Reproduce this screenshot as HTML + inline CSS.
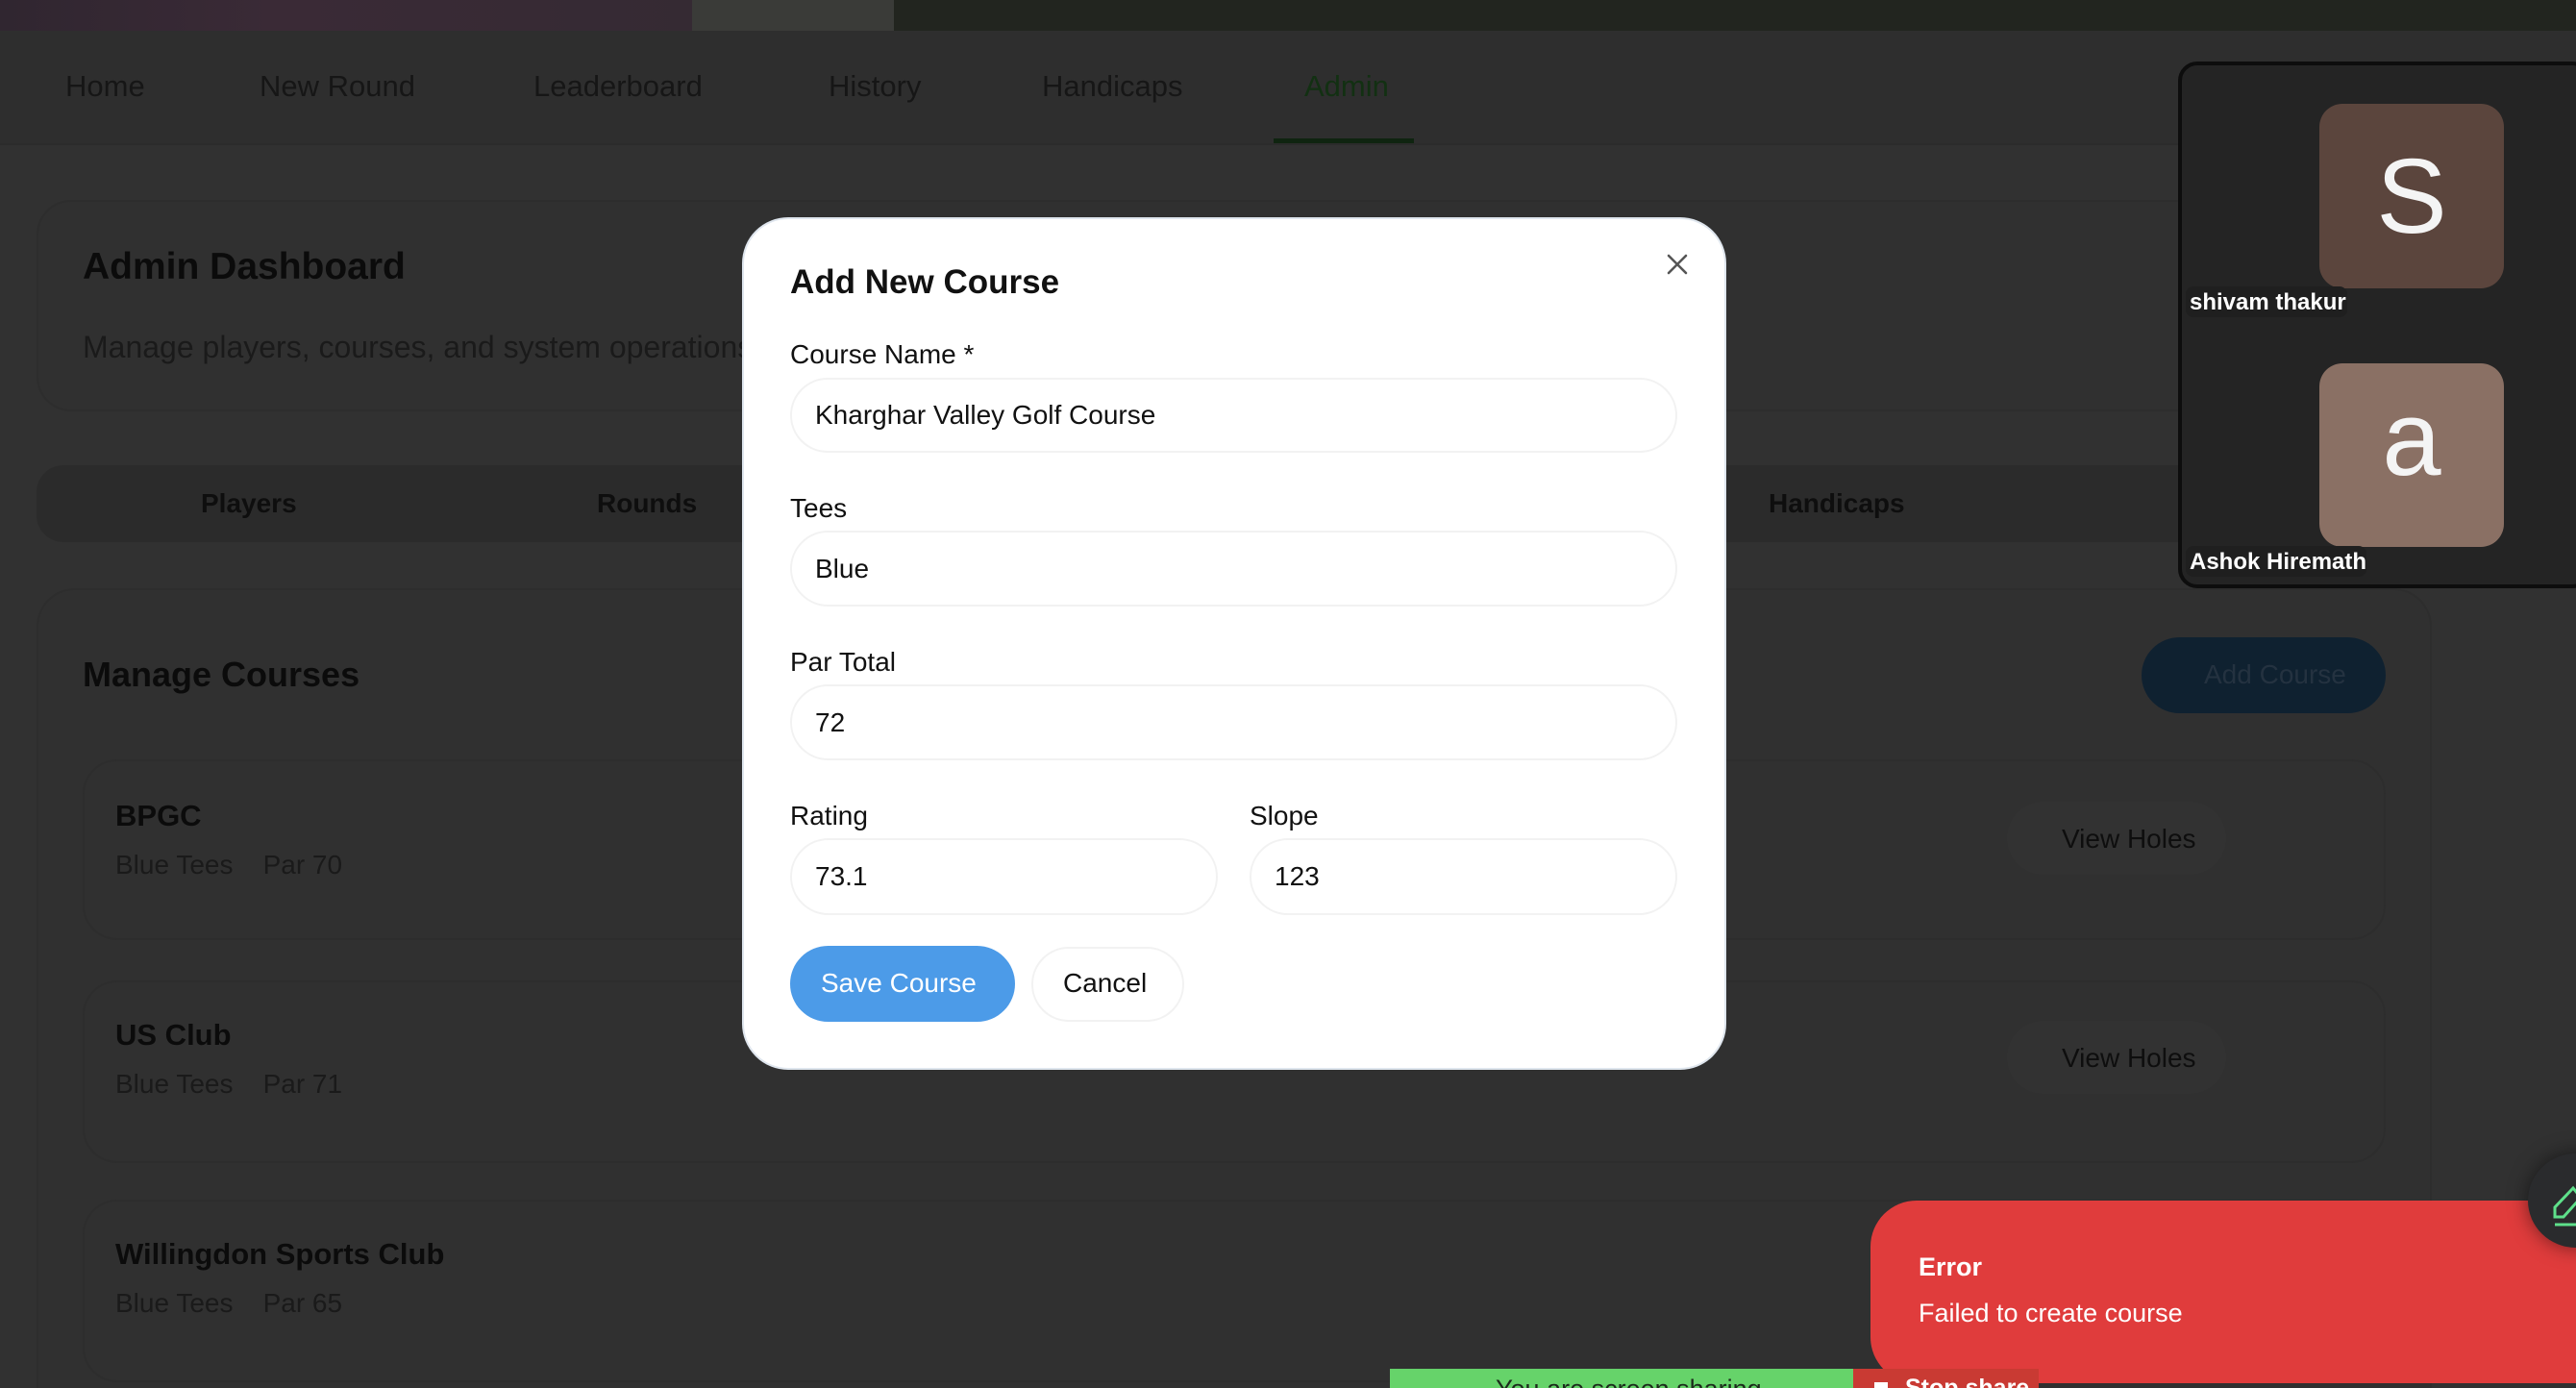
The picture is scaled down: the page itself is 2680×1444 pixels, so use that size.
<!DOCTYPE html>
<html><head><meta charset="utf-8"><style>
*{margin:0;padding:0;box-sizing:border-box}
html,body{width:2680px;height:1444px;overflow:hidden;background:#313131;font-family:"Liberation Sans",sans-serif}
#w{position:relative;width:2680px;height:1444px;overflow:hidden}
.a{position:absolute}
.t{position:absolute;white-space:nowrap;line-height:1}
</style></head><body><div id="w">
<!-- top banner -->
<div class="a" style="left:0;top:0;width:2680px;height:32px;background:#22251f"></div>
<div class="a" style="left:0;top:0;width:720px;height:32px;background:linear-gradient(90deg,#302630,#3a2a36 40%,#352a33)"></div>
<div class="a" style="left:720px;top:0;width:210px;height:32px;background:#3a3b38"></div>
<!-- nav -->
<div class="a" style="left:0;top:32px;width:2680px;height:119px;background:#2e2e2e;border-bottom:2px solid #2b2b2b"></div>
<div class="t" style="left:68px;top:74px;font-size:31px;color:#161616">Home</div>
<div class="t" style="left:270px;top:74px;font-size:31px;color:#161616">New Round</div>
<div class="t" style="left:555px;top:74px;font-size:31px;color:#161616">Leaderboard</div>
<div class="t" style="left:862px;top:74px;font-size:31px;color:#161616">History</div>
<div class="t" style="left:1084px;top:74px;font-size:31px;color:#161616">Handicaps</div>
<div class="t" style="left:1357px;top:74px;font-size:31px;color:#123012">Admin</div>
<div class="a" style="left:1325px;top:144px;width:146px;height:5px;background:#0f2410"></div>
<!-- admin card -->
<div class="a" style="left:38px;top:208px;width:2492px;height:220px;border:2px solid #2d2d2d;border-radius:36px;background:#303030"></div>
<div class="t" style="left:86px;top:258px;font-size:39px;font-weight:bold;color:#0b0b0b">Admin Dashboard</div>
<div class="t" style="left:86px;top:345px;font-size:32px;color:#1a1a1a">Manage players, courses, and system operations</div>
<!-- tabs -->
<div class="a" style="left:38px;top:484px;width:2492px;height:80px;border-radius:28px;background:#2b2b2b"></div>
<div class="t" style="left:209px;top:510px;font-size:28px;font-weight:bold;color:#0e0e0e">Players</div>
<div class="t" style="left:621px;top:510px;font-size:28px;font-weight:bold;color:#0e0e0e">Rounds</div>
<div class="t" style="left:1840px;top:510px;font-size:28px;font-weight:bold;color:#0e0e0e">Handicaps</div>
<!-- manage courses card -->
<div class="a" style="left:38px;top:612px;width:2492px;height:900px;border:2px solid #2d2d2d;border-radius:40px;background:#303030"></div>
<div class="t" style="left:86px;top:684px;font-size:36px;font-weight:bold;color:#0b0b0b">Manage Courses</div>
<div class="a" style="left:2228px;top:663px;width:254px;height:79px;border-radius:40px;background:#0f2130"></div>
<div class="t" style="left:2293px;top:688px;font-size:28px;color:#243240">Add Course</div>
<!-- rows -->
<div class="a" style="left:86px;top:790px;width:2396px;height:188px;border:2px solid #2d2d2d;border-radius:36px"></div>
<div class="t" style="left:120px;top:833px;font-size:31px;font-weight:bold;color:#0b0b0b">BPGC</div>
<div class="t" style="left:120px;top:886px;font-size:28px;color:#1a1a1a">Blue Tees&nbsp;&nbsp;&nbsp;&nbsp;Par 70</div>
<div class="a" style="left:2088px;top:834px;width:228px;height:76px;border-radius:38px;background:#323232"></div>
<div class="t" style="left:2145px;top:859px;font-size:28px;color:#0e0e0e">View Holes</div>
<div class="a" style="left:86px;top:1020px;width:2396px;height:190px;border:2px solid #2d2d2d;border-radius:36px"></div>
<div class="t" style="left:120px;top:1061px;font-size:31px;font-weight:bold;color:#0b0b0b">US Club</div>
<div class="t" style="left:120px;top:1114px;font-size:28px;color:#1a1a1a">Blue Tees&nbsp;&nbsp;&nbsp;&nbsp;Par 71</div>
<div class="a" style="left:2088px;top:1062px;width:228px;height:76px;border-radius:38px;background:#323232"></div>
<div class="t" style="left:2145px;top:1087px;font-size:28px;color:#0e0e0e">View Holes</div>
<div class="a" style="left:86px;top:1248px;width:2396px;height:190px;border:2px solid #2d2d2d;border-radius:36px"></div>
<div class="t" style="left:120px;top:1289px;font-size:31px;font-weight:bold;color:#0b0b0b">Willingdon Sports Club</div>
<div class="t" style="left:120px;top:1342px;font-size:28px;color:#1a1a1a">Blue Tees&nbsp;&nbsp;&nbsp;&nbsp;Par 65</div>
<!-- modal -->
<div class="a" style="left:772px;top:226px;width:1024px;height:887px;border-radius:48px;background:#fff;border:2px solid #dfe6ee"></div>
<div class="t" style="left:822px;top:276px;font-size:35px;font-weight:bold;color:#111">Add New Course</div>
<svg class="a" style="left:1733px;top:263px" width="24" height="24" viewBox="0 0 24 24"><path d="M3 3L21 21M21 3L3 21" stroke="#555" stroke-width="2.6" stroke-linecap="round"/></svg>
<div class="t" style="left:822px;top:355px;font-size:28px;color:#111">Course Name *</div>
<div class="a" style="left:822px;top:393px;width:923px;height:78px;border:2px solid #f2f2f2;border-radius:40px"></div>
<div class="t" style="left:848px;top:418px;font-size:28px;color:#111">Kharghar Valley Golf Course</div>
<div class="t" style="left:822px;top:515px;font-size:28px;color:#111">Tees</div>
<div class="a" style="left:822px;top:552px;width:923px;height:79px;border:2px solid #f2f2f2;border-radius:40px"></div>
<div class="t" style="left:848px;top:578px;font-size:28px;color:#111">Blue</div>
<div class="t" style="left:822px;top:675px;font-size:28px;color:#111">Par Total</div>
<div class="a" style="left:822px;top:712px;width:923px;height:79px;border:2px solid #f2f2f2;border-radius:40px"></div>
<div class="t" style="left:848px;top:738px;font-size:28px;color:#111">72</div>
<div class="t" style="left:822px;top:835px;font-size:28px;color:#111">Rating</div>
<div class="a" style="left:822px;top:872px;width:445px;height:80px;border:2px solid #f2f2f2;border-radius:40px"></div>
<div class="t" style="left:848px;top:898px;font-size:28px;color:#111">73.1</div>
<div class="t" style="left:1300px;top:835px;font-size:28px;color:#111">Slope</div>
<div class="a" style="left:1300px;top:872px;width:445px;height:80px;border:2px solid #f2f2f2;border-radius:40px"></div>
<div class="t" style="left:1326px;top:898px;font-size:28px;color:#111">123</div>
<div class="a" style="left:822px;top:984px;width:234px;height:79px;border-radius:40px;background:#4c9be8"></div>
<div class="t" style="left:854px;top:1009px;font-size:28px;color:#fff">Save Course</div>
<div class="a" style="left:1073px;top:985px;width:159px;height:78px;border-radius:40px;border:2px solid #f2f2f2"></div>
<div class="t" style="left:1106px;top:1009px;font-size:28px;color:#111">Cancel</div>
<!-- participants panel -->
<div class="a" style="left:2266px;top:64px;width:430px;height:548px;border:4px solid #0d0d0d;border-radius:20px;background:#242424"></div>
<div class="a" style="left:2413px;top:108px;width:192px;height:192px;border-radius:24px;background:#5b453d"></div>
<div class="t" style="left:2413px;top:150px;width:192px;text-align:center;font-size:110px;color:#f4f4f4;line-height:1">S</div>
<div class="a" style="left:2274px;top:298px;width:168px;height:32px;border-radius:8px;background:#1f1f1f"></div>
<div class="t" style="left:2278px;top:303px;font-size:24px;font-weight:bold;color:#fff">shivam thakur</div>
<div class="a" style="left:2413px;top:378px;width:192px;height:191px;border-radius:24px;background:#8a7064"></div>
<div class="t" style="left:2413px;top:402px;width:192px;text-align:center;font-size:110px;color:#f4f4f4;line-height:1">a</div>
<div class="a" style="left:2274px;top:568px;width:188px;height:32px;border-radius:8px;background:#1f1f1f"></div>
<div class="t" style="left:2278px;top:573px;font-size:24px;font-weight:bold;color:#fff">Ashok Hiremath</div>
<!-- error toast -->
<div class="a" style="left:1946px;top:1249px;width:760px;height:190px;border-radius:48px 0 0 48px;background:#e03c3c"></div>
<div class="t" style="left:1996px;top:1305px;font-size:27px;font-weight:bold;color:#fff">Error</div>
<div class="t" style="left:1996px;top:1353px;font-size:27px;color:#fff">Failed to create course</div>
<div class="a" style="left:2630px;top:1200px;width:100px;height:98px;border-radius:50%;background:#2a2b2d;box-shadow:0 0 20px rgba(0,0,0,.5)"></div>
<svg class="a" style="left:2655px;top:1228px" width="25" height="50" viewBox="0 0 25 50"><path d="M3 28L3 38L12 38L30 18L22 8Z" fill="none" stroke="#5ee08a" stroke-width="3"/><path d="M3 46H30" stroke="#5ee08a" stroke-width="3"/></svg>
<!-- screen share bar -->
<div class="a" style="left:1446px;top:1424px;width:482px;height:20px;background:#66d36a;overflow:hidden">
  <div class="t" style="left:110px;top:8px;font-size:27px;color:#1b2a1b">You are screen sharing</div>
</div>
<div class="a" style="left:1928px;top:1424px;width:193px;height:20px;background:#c93a33;overflow:hidden">
  <div class="a" style="left:22px;top:14px;width:14px;height:14px;background:#fff"></div>
  <div class="t" style="left:54px;top:8px;font-size:25px;font-weight:bold;color:#fff">Stop share</div>
</div>
</div></body></html>
